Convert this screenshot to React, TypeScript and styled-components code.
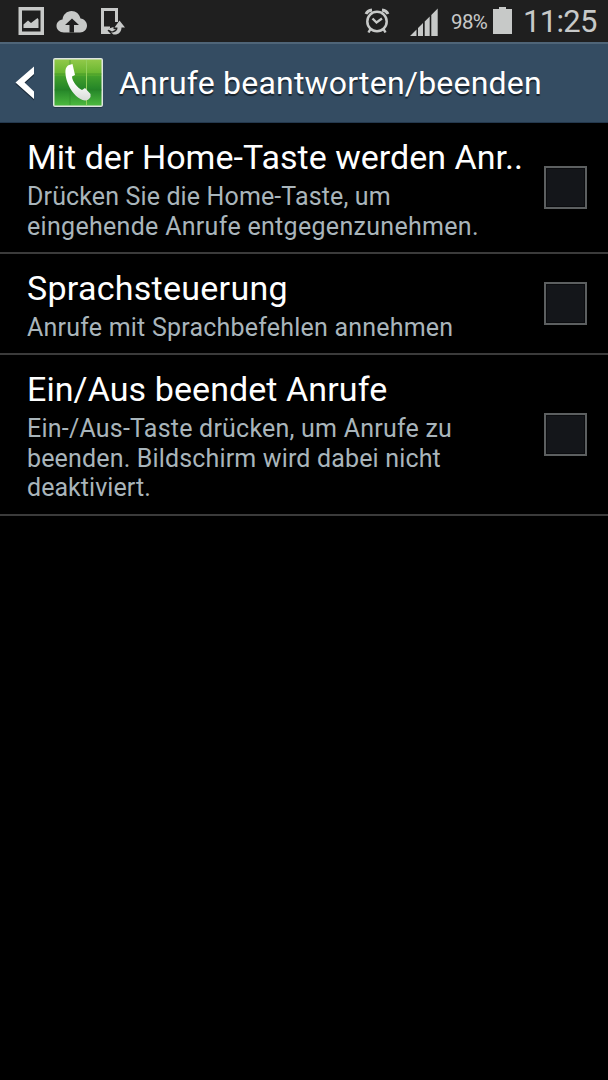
import React from "react";
import styled, { createGlobalStyle } from "styled-components";

const GlobalStyle = createGlobalStyle`
  * { box-sizing: border-box; }
  body { margin: 0; background: #000; }
`;

const Screen = styled.main`
  width: 608px;
  height: 1080px;
  overflow: hidden;
  background: #000;
  font-family: Roboto, "Noto Sans", sans-serif;
`;

const StatusBar = styled.div`
  height: 42px;
  display: flex;
  justify-content: space-between;
  background: #1f1f1f;
  color: #c7c9c8;
`;

const StatusGroup = styled.div`
  display: flex;
  height: 42px;
`;

const SignalIconSlot = styled.span`
  display: flex;
  margin: 0 11px 0 20px;
`;

const BatteryLevel = styled.span`
  width: 42px;
  margin-left: 1px;
  font-size: 20.5px;
  line-height: 44px;
  letter-spacing: -0.6px;
  white-space: nowrap;
`;

const Clock = styled.span`
  width: 85px;
  margin-left: 11px;
  font-size: 31px;
  line-height: 43px;
  letter-spacing: -0.7px;
  white-space: nowrap;
`;

const Header = styled.header`
  height: 81px;
  display: flex;
  align-items: center;
  padding-left: 15px;
  background: #344c62;
  border-top: 2px solid #4f6578;
  border-bottom: 1px solid #24384d;
`;

const HeaderTitle = styled.h1`
  margin: 0 0 1px 15px;
  color: #fff;
  font-size: 32px;
  font-weight: 400;
  line-height: 40px;
  letter-spacing: 0.2px;
  white-space: nowrap;
  text-shadow: 0 2px 1px rgba(0, 0, 0, 0.55);
`;

const BackIcon = styled.svg`
  margin-right: 17px;
`;

const Row = styled.section<{ $height: number }>`
  height: ${(p) => p.$height}px;
  display: flex;
  align-items: center;
  justify-content: space-between;
  padding: 0 21px 0 27px;
  border-bottom: 2px solid #3b3b3b;
`;

const RowText = styled.div`
  align-self: flex-start;
  padding-top: 14px;
`;

const RowTitle = styled.h2<{ $spacing: number }>`
  margin: 0 0 5px;
  color: #fff;
  font-size: 34px;
  font-weight: 400;
  line-height: 40px;
  letter-spacing: ${(p) => p.$spacing}px;
  white-space: nowrap;
`;

const Summary = styled.p`
  margin: 0;
  color: #a9b5bb;
  font-size: 25px;
  line-height: 29.5px;
`;

const Line = styled.span<{ $spacing: number }>`
  display: block;
  letter-spacing: ${(p) => p.$spacing}px;
  white-space: nowrap;
`;

const Checkbox = styled.span`
  flex: none;
  width: 43px;
  height: 43px;
  border: 2px solid #5c5f60;
  background: #14161a;
  box-shadow: inset 0 0 0 1px #0b0c0f;
`;

type Setting = {
  title: string;
  spacing: number;
  height: number;
  lines: [string, number][];
};

const settings: Setting[] = [
  {
    title: "Mit der Home-Taste werden Anr..",
    spacing: 0.03,
    height: 131,
    lines: [
      ["Drücken Sie die Home-Taste, um", 0.13],
      ["eingehende Anrufe entgegenzunehmen.", 0.3],
    ],
  },
  {
    title: "Sprachsteuerung",
    spacing: 0.27,
    height: 101,
    lines: [["Anrufe mit Sprachbefehlen annehmen", 0.21]],
  },
  {
    title: "Ein/Aus beendet Anrufe",
    spacing: 0.08,
    height: 161,
    lines: [
      ["Ein-/Aus-Taste drücken, um Anrufe zu", 0.22],
      ["beenden. Bildschirm wird dabei nicht", 0.16],
      ["deaktiviert.", 0.05],
    ],
  },
];

const NotificationIcons = () => (
  <svg width="130" height="42" viewBox="0 0 130 42" fill="#c7c9c8">
    <path fillRule="evenodd" d="M18.5 7H44v28H18.500ZM22 10.500V31.500H40.500V10.500Z" />
    <path d="M23.500 28V24.500L28 20.500L31 23L37.500 18L38.500 19.500V28Z" />
    <path d="M64 32.500C59.500 32.500 56.500 29.500 56.500 26C56.500 22.500 59 20 62.500 19.500C63 14.500 67 11 71.500 11C76 11 79.500 14 80.500 18.500C84.500 19 87 22 87 25.500C87 29.500 84 32.500 80 32.500Z" />
    <path d="M72 18.500L79 25H74V32.500H69.500V25H65Z" fill="#1f1f1f" />
    <path d="M101 8H118V22H115V11H104V26.500H110V28L107.500 30.500L111 34H101Z" />
    <path d="M119.500 20.500L125 27.500H121.500C121.500 32 118.500 35 113.500 34.500L111 32.500C115 32.500 117.500 31 117.500 27.500H114.500Z" />
    <path d="M107.500 29L113.500 27V29L116 29.500L112 31.500Z" />
  </svg>
);

const AlarmIcon = () => (
  <svg width="26" height="42" viewBox="0 0 26 42" fill="none" stroke="#c7c9c8">
    <circle cx="13" cy="21.500" r="9.700" strokeWidth="2.500" />
    <path d="M8.500 18.500L12.500 22.500L18 18.500" strokeWidth="2.300" />
    <path d="M2 14Q3.500 10.500 8 10M24 14Q22.500 10.500 18 10" strokeWidth="3" />
    <path d="M6.500 29L4.500 32.500M19.500 29L21.500 32.500" strokeWidth="2.500" />
  </svg>
);

const SignalIcon = () => (
  <svg width="29" height="42" viewBox="0 0 29 42" fill="#c7c9c8">
    <path d="M0 36L6.500 29.500V36ZM8 28L13 23V36H8ZM14.700 21.500L19.700 16.500V36H14.700ZM21.300 15L27.700 8.500V36H21.300Z" />
  </svg>
);

const BatteryIcon = () => (
  <svg width="19" height="42" viewBox="0 0 19 42" fill="#c7c9c8">
    <path d="M6 7H13V9H19V34H0V9H6Z" />
  </svg>
);

const PhoneIcon = () => (
  <svg width="52" height="54" viewBox="0 0 52 54">
    <defs>
      <linearGradient id="tile" x1="0" y1="0" x2="0" y2="1">
        <stop offset="0" stopColor="#92c949" />
        <stop offset="0.320" stopColor="#65b52f" />
        <stop offset="0.370" stopColor="#419f2b" />
        <stop offset="0.650" stopColor="#248528" />
        <stop offset="1" stopColor="#4cb83e" />
      </linearGradient>
      <linearGradient id="handset" x1="0" y1="0" x2="0" y2="1">
        <stop offset="0.500" stopColor="#ffffff" />
        <stop offset="1" stopColor="#d8dcd8" />
      </linearGradient>
    </defs>
    <rect x="1" y="3" width="50" height="49" rx="2" fill="#24384a" />
    <rect x="1" y="2" width="50" height="49" rx="2" fill="#dfe5df" />
    <rect x="2.500" y="3.500" width="47" height="46" fill="url(#tile)" />
    <path d="M18 4V49M2.500 18H49.500M2.500 34H49.500" stroke="#277f26" strokeOpacity="0.500" strokeWidth="1" />
    <path d="M34.500 4V49" stroke="#93d05c" strokeWidth="1" />
    <path
      d="M17 9L20.500 8L23 19L20 20.500C20 25 25.500 32 30 34L33 32L38.500 38V41C36.500 44.500 33.500 45 30.500 44C20.500 40 12.500 25 13.500 14C14 11.500 15 10 17 9Z"
      fill="url(#handset)"
    />
  </svg>
);

export default function App() {
  return (
    <Screen>
      <GlobalStyle />
      <StatusBar>
        <StatusGroup>
          <NotificationIcons />
        </StatusGroup>
        <StatusGroup>
          <AlarmIcon />
          <SignalIconSlot>
            <SignalIcon />
          </SignalIconSlot>
          <BatteryLevel>98%</BatteryLevel>
          <BatteryIcon />
          <Clock>11:25</Clock>
        </StatusGroup>
      </StatusBar>
      <Header>
        <BackIcon width="20" height="36" viewBox="0 0 20 36">
          <path d="M19 3V10.500L9.500 19L19 28V35.500L0.500 19Z" fill="#1c2c3b" />
          <path d="M19 1.500V9L9.500 17.500L19 26.500V34L0.500 17.500Z" fill="#fff" />
        </BackIcon>
        <PhoneIcon />
        <HeaderTitle>Anrufe beantworten/beenden</HeaderTitle>
      </Header>
      {settings.map((s) => (
        <Row key={s.title} $height={s.height}>
          <RowText>
            <RowTitle $spacing={s.spacing}>{s.title}</RowTitle>
            <Summary>
              {s.lines.map(([text, spacing]) => (
                <Line key={text} $spacing={spacing}>{text}</Line>
              ))}
            </Summary>
          </RowText>
          <Checkbox />
        </Row>
      ))}
    </Screen>
  );
}
